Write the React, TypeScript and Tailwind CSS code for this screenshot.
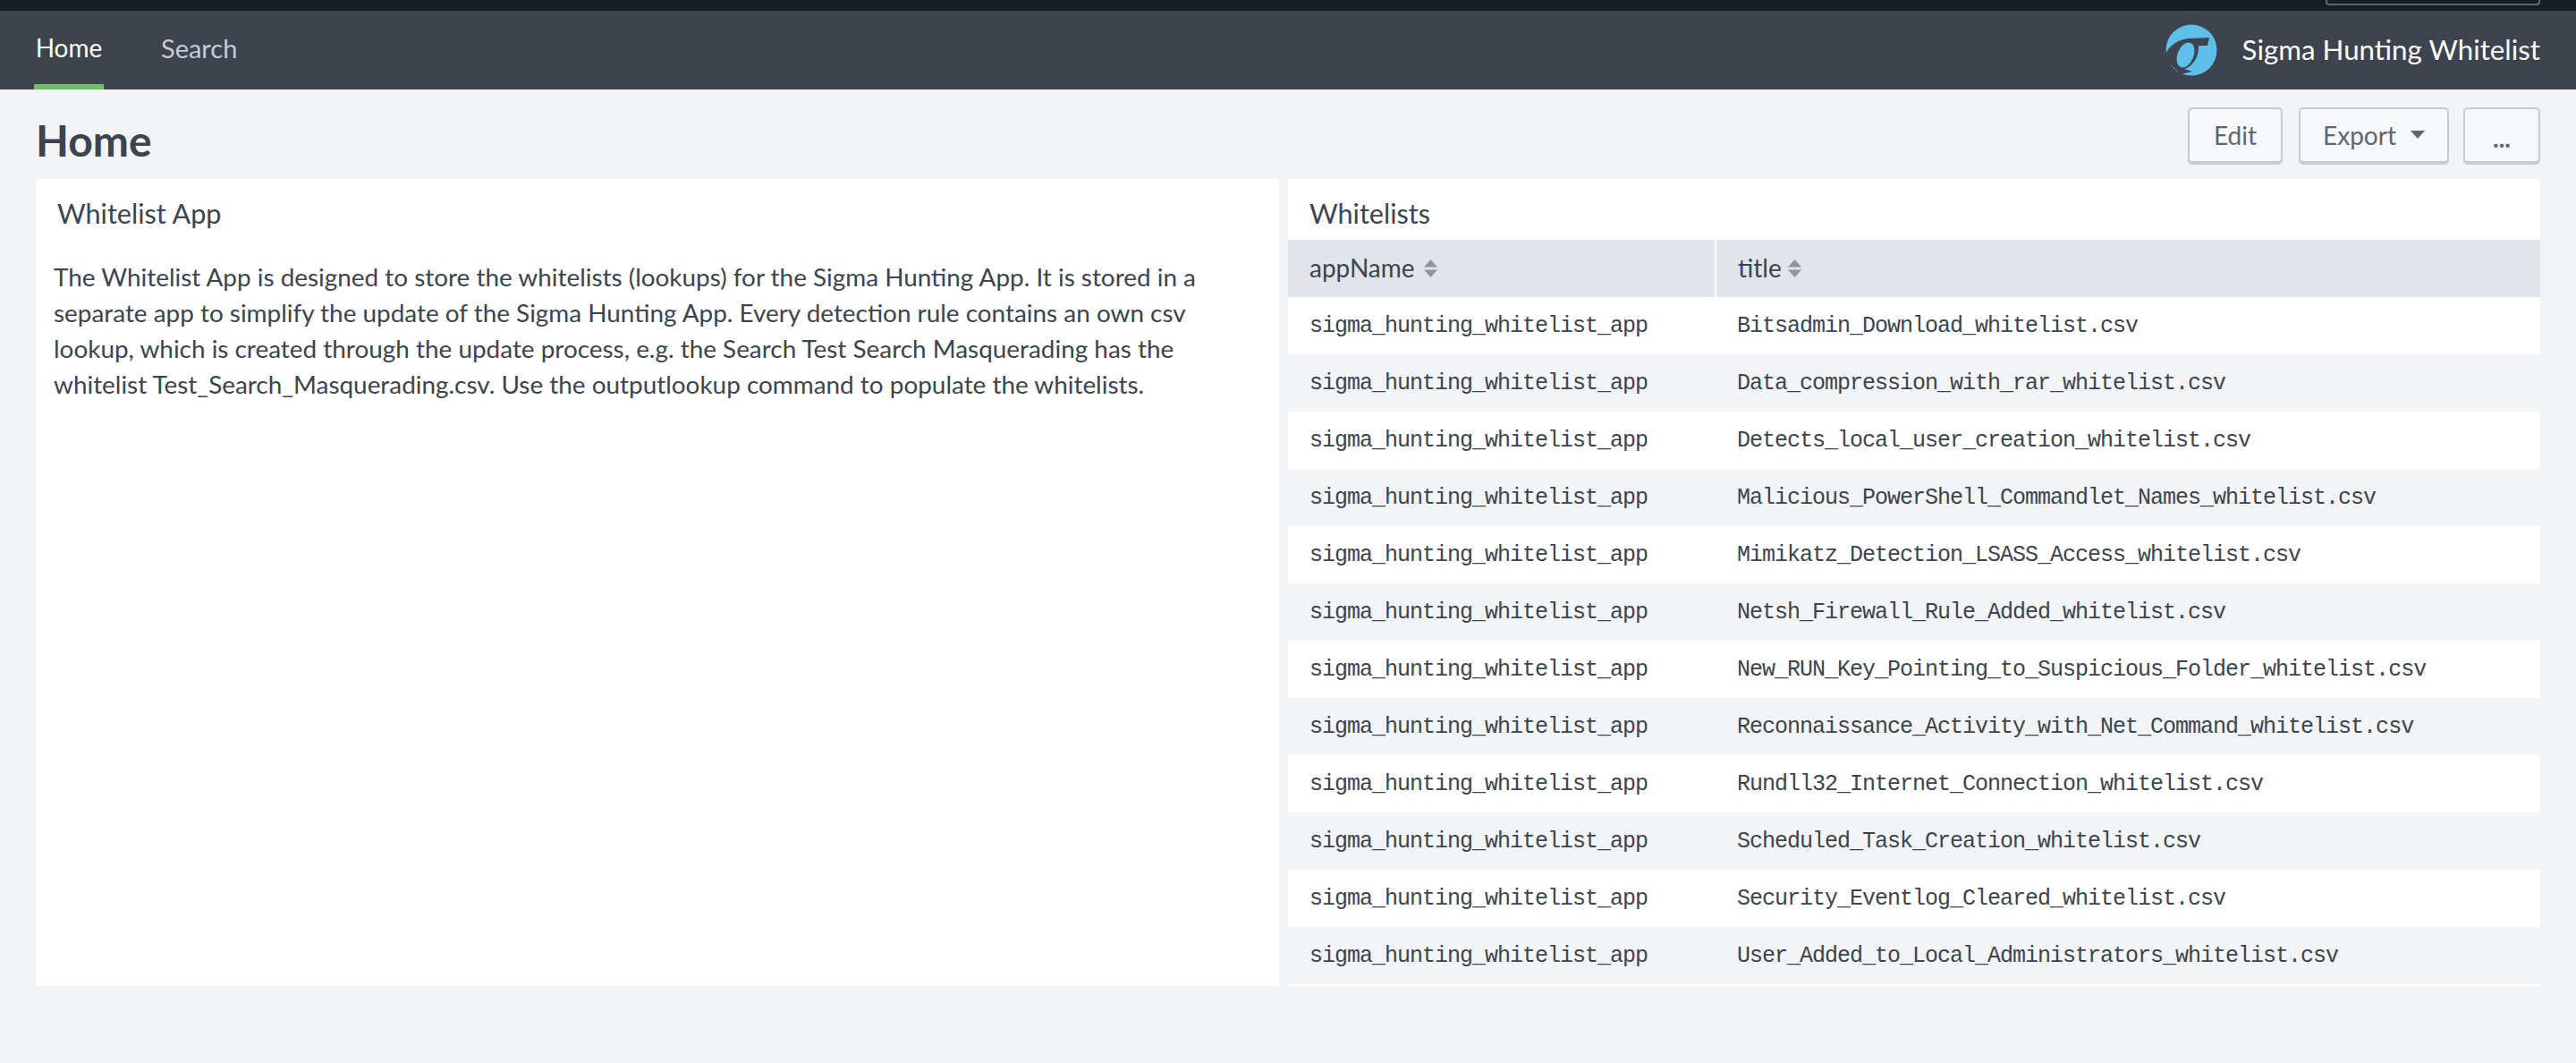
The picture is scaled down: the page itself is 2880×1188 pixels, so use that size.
const rows = [
  "Bitsadmin_Download_whitelist.csv",
  "Data_compression_with_rar_whitelist.csv",
  "Detects_local_user_creation_whitelist.csv",
  "Malicious_PowerShell_Commandlet_Names_whitelist.csv",
  "Mimikatz_Detection_LSASS_Access_whitelist.csv",
  "Netsh_Firewall_Rule_Added_whitelist.csv",
  "New_RUN_Key_Pointing_to_Suspicious_Folder_whitelist.csv",
  "Reconnaissance_Activity_with_Net_Command_whitelist.csv",
  "Rundll32_Internet_Connection_whitelist.csv",
  "Scheduled_Task_Creation_whitelist.csv",
  "Security_Eventlog_Cleared_whitelist.csv",
  "User_Added_to_Local_Administrators_whitelist.csv",
];

function SortIcon({ className }: { className: string }) {
  return (
    <svg width="15" height="20" viewBox="0 0 15 20" className={`mt-[2px] ${className}`}>
      <path d="M7.5 0 L15 8.5 H0 Z M0 11.5 H15 L7.5 20 Z" fill="#8c949d" />
    </svg>
  );
}

function Logo() {
  return (
    <svg width="58" height="58" viewBox="0 0 58 58">
      <circle cx="29" cy="29" r="28.5" fill="#5cc0ea" />
      <path
        d="M0 33 C6 22 16 17 26 16 L49 15 L47 24 L37 24 C38 36 30 48 21 50 L30 53 L17 56 L0 40 Z"
        fill="#3e444d"
      />
      <ellipse cx="22.5" cy="34.5" rx="9" ry="14.5" transform="rotate(22 22.5 34.5)" fill="#5cc0ea" />
    </svg>
  );
}

function Button({ children, className }: { children: React.ReactNode; className: string }) {
  return (
    <button className={`flex h-[64px] items-center justify-center rounded-[5px] border-2 border-b-[4px] border-[#c3cbd4] bg-[#f7f8fa] text-[#5c6773] ${className}`}>
      {children}
    </button>
  );
}

export default function App() {
  return (
    <div className="min-h-[1188px] bg-[#f2f4f5] font-['Lato','Open_Sans',sans-serif] text-[#3c444d]">
      <div className="h-3 bg-[#171d21]">
        <div className="ml-[2600px] h-[6px] w-[240px] rounded-b-[4px] border-2 border-t-0 border-[#5c6773]"></div>
      </div>
      <nav className="flex h-[88px] items-stretch justify-between bg-[#3e444d] pl-[38px] pr-[40px]">
        <div className="flex gap-[64px]">
          <div className="flex w-[78px] items-center justify-center border-b-[6px] border-[#6fbf68] text-[28px] text-white">Home</div>
          <div className="flex items-center pb-[4px] text-[29px] text-[#c3cbd4]">Search</div>
        </div>
        <div className="flex items-center gap-[28px]">
          <Logo />
          <span className="pb-[2px] text-[31.3px] text-white">Sigma Hunting Whitelist</span>
        </div>
      </nav>
      <div className="flex h-[100px] items-center justify-between px-[40px]">
        <h1 className="pt-[14px] text-[48px] font-bold leading-none">Home</h1>
        <div className="flex pt-[4px]">
          <Button className="w-[106px] text-[28px]">Edit</Button>
          <Button className="ml-[18px] w-[168px] gap-[16px] text-[28px]">
            Export
            <span className="mb-[2px] h-0 w-0 border-x-[8px] border-t-[9px] border-x-transparent border-t-[#5c6773]"></span>
          </Button>
          <Button className="ml-[16px] w-[86px] pt-[6px] text-[28px] font-bold">...</Button>
        </div>
      </div>
      <div className="flex h-[902px] gap-[10px] px-[40px]">
        <section className="w-[1390px] bg-white">
          <h2 className="pl-[24px] pt-[21px] text-[30.6px] leading-[36px]">Whitelist App</h2>
          <p className="mt-[32px] w-[1320px] pl-5 text-[27.9px] leading-[40px]">
            The Whitelist App is designed to store the whitelists (lookups) for the Sigma Hunting App. It is stored in a separate app to simplify the update of the Sigma Hunting App. Every detection rule contains an own csv lookup, which is created through the update process, e.g. the Search Test Search Masquerading has the whitelist Test_Search_Masquerading.csv. Use the outputlookup command to populate the whitelists.
          </p>
        </section>
        <section className="flex-1 bg-white">
          <h2 className="h-[68px] pl-[24px] pt-[21px] text-[30.6px] leading-[36px]">Whitelists</h2>
          <table className="w-full border-collapse">
            <thead>
              <tr className="h-[64px] bg-[#e1e4e8]">
                <th className="w-[478px] border-r-2 border-white pl-[24px] text-left text-[28px] font-normal">
                  <span className="flex items-center pb-[2px]">appName<SortIcon className="ml-[10px]" /></span>
                </th>
                <th className="pl-[24px] text-left text-[28px] font-normal">
                  <span className="flex items-center pb-[2px]">title<SortIcon className="ml-[7px]" /></span>
                </th>
              </tr>
            </thead>
            <tbody className="font-['Liberation_Mono',monospace] text-[25px] tracking-[-1px]">
              {rows.map((title) => (
                <tr key={title} className="h-[64px] even:bg-[#f2f4f5]">
                  <td className="pl-[24px] pt-[2px]">sigma_hunting_whitelist_app</td>
                  <td className="pl-[24px] pt-[2px]">{title}</td>
                </tr>
              ))}
            </tbody>
          </table>
        </section>
      </div>
    </div>
  );
}
